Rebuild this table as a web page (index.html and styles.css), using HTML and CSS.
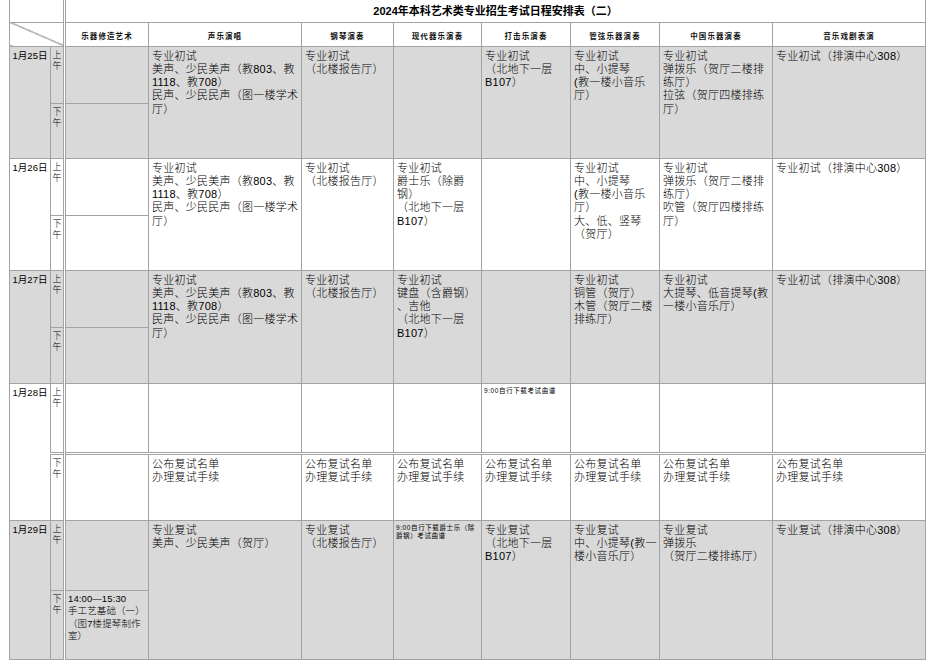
FILE: index.html
```html
<!DOCTYPE html>
<html lang="zh-CN">
<head>
<meta charset="utf-8">
<title>2024年本科艺术类专业招生考试日程安排表（二）</title>
<link rel="stylesheet" href="styles.css">
</head>
<body>
<table class="sched">
  <colgroup>
    <col class="w-date"><col class="w-per"><col class="w-c1"><col class="w-c2"><col class="w-c3">
    <col class="w-c4"><col class="w-c5"><col class="w-c6"><col class="w-c7"><col class="w-c8">
  </colgroup>
  <tr class="r-title">
    <td colspan="2" class="blank"></td>
    <td colspan="8" class="title c1">2024年本科艺术类专业招生考试日程安排表（二）</td>
  </tr>
  <tr class="r-head">
    <td colspan="2" class="diag"></td>
    <td class="hd c1">乐器修造艺术</td>
    <td class="hd">声乐演唱</td>
    <td class="hd">钢琴演奏</td>
    <td class="hd">现代器乐演奏</td>
    <td class="hd">打击乐演奏</td>
    <td class="hd">管弦乐器演奏</td>
    <td class="hd">中国乐器演奏</td>
    <td class="hd">音乐戏剧表演</td>
  </tr>

  <!-- 1月25日 -->
  <tr class="g r-am1">
    <td rowspan="2" class="date">1月25日</td>
    <td class="per">上<br>午</td>
    <td class="c1"></td>
    <td rowspan="2" class="t">专业初试<br>美声、少民美声（教803、教<br>1118、教708）<br>民声、少民民声（图一楼学术<br>厅）</td>
    <td rowspan="2" class="t">专业初试<br>（北楼报告厅）</td>
    <td rowspan="2" class="t"></td>
    <td rowspan="2" class="t">专业初试<br>（北地下一层<br>B107）</td>
    <td rowspan="2" class="t">专业初试<br>中、小提琴<br>(教一楼小音乐<br>厅）</td>
    <td rowspan="2" class="t">专业初试<br>弹拨乐（贺厅二楼排<br>练厅）<br>拉弦（贺厅四楼排练<br>厅）</td>
    <td rowspan="2" class="t">专业初试（排演中心308）</td>
  </tr>
  <tr class="g r-pm1">
    <td class="per">下<br>午</td>
    <td class="c1"></td>
  </tr>

  <!-- 1月26日 -->
  <tr class="r-am1">
    <td rowspan="2" class="date">1月26日</td>
    <td class="per">上<br>午</td>
    <td class="c1"></td>
    <td rowspan="2" class="t">专业初试<br>美声、少民美声（教803、教<br>1118、教708）<br>民声、少民民声（图一楼学术<br>厅）</td>
    <td rowspan="2" class="t">专业初试<br>（北楼报告厅）</td>
    <td rowspan="2" class="t">专业初试<br>爵士乐（除爵<br>钢）<br>（北地下一层<br>B107）</td>
    <td rowspan="2" class="t"></td>
    <td rowspan="2" class="t">专业初试<br>中、小提琴<br>(教一楼小音乐<br>厅）<br>大、低、竖琴<br>（贺厅）</td>
    <td rowspan="2" class="t">专业初试<br>弹拨乐（贺厅二楼排<br>练厅）<br>吹管（贺厅四楼排练<br>厅）</td>
    <td rowspan="2" class="t">专业初试（排演中心308）</td>
  </tr>
  <tr class="r-pm1">
    <td class="per">下<br>午</td>
    <td class="c1"></td>
  </tr>

  <!-- 1月27日 -->
  <tr class="g r-am1">
    <td rowspan="2" class="date">1月27日</td>
    <td class="per">上<br>午</td>
    <td class="c1"></td>
    <td rowspan="2" class="t">专业初试<br>美声、少民美声（教803、教<br>1118、教708）<br>民声、少民民声（图一楼学术<br>厅）</td>
    <td rowspan="2" class="t">专业初试<br>（北楼报告厅）</td>
    <td rowspan="2" class="t">专业初试<br>键盘（含爵钢）<br>、吉他<br>（北地下一层<br>B107）</td>
    <td rowspan="2" class="t"></td>
    <td rowspan="2" class="t">专业初试<br>铜管（贺厅）<br>木管（贺厅二楼<br>排练厅）</td>
    <td rowspan="2" class="t">专业初试<br>大提琴、低音提琴(教<br>一楼小音乐厅）</td>
    <td rowspan="2" class="t">专业初试（排演中心308）</td>
  </tr>
  <tr class="g r-pm3">
    <td class="per">下<br>午</td>
    <td class="c1"></td>
  </tr>

  <!-- 1月28日 -->
  <tr class="r-am4">
    <td rowspan="2" class="date">1月28日</td>
    <td class="per">上<br>午</td>
    <td class="c1"></td>
    <td class="t"></td>
    <td class="t"></td>
    <td class="t"></td>
    <td class="sm">9:00自行下载考试曲谱</td>
    <td class="t"></td>
    <td class="t"></td>
    <td class="t"></td>
  </tr>
  <tr class="r-pm4 split">
    <td class="per">下<br>午</td>
    <td class="c1"></td>
    <td class="t">公布复试名单<br>办理复试手续</td>
    <td class="t">公布复试名单<br>办理复试手续</td>
    <td class="t">公布复试名单<br>办理复试手续</td>
    <td class="t">公布复试名单<br>办理复试手续</td>
    <td class="t">公布复试名单<br>办理复试手续</td>
    <td class="t">公布复试名单<br>办理复试手续</td>
    <td class="t">公布复试名单<br>办理复试手续</td>
  </tr>

  <!-- 1月29日 -->
  <tr class="g r-am4">
    <td rowspan="2" class="date">1月29日</td>
    <td class="per">上<br>午</td>
    <td class="c1"></td>
    <td rowspan="2" class="t">专业复试<br>美声、少民美声（贺厅）</td>
    <td rowspan="2" class="t">专业复试<br>（北楼报告厅）</td>
    <td rowspan="2" class="sm">9:00自行下载爵士乐（除<br>爵钢）考试曲谱</td>
    <td rowspan="2" class="t">专业复试<br>（北地下一层<br>B107）</td>
    <td rowspan="2" class="t">专业复试<br>中、小提琴(教一<br>楼小音乐厅）</td>
    <td rowspan="2" class="t">专业复试<br>弹拨乐<br>（贺厅二楼排练厅）</td>
    <td rowspan="2" class="t">专业复试（排演中心308）</td>
  </tr>
  <tr class="g r-pm5">
    <td class="per">下<br>午</td>
    <td class="c1 t2">14:00—15:30<br>手工艺基础（一）<br>（图7楼提琴制作<br>室）</td>
  </tr>
</table>
</body>
</html>
```

FILE: styles.css
```css
html, body {
  margin: 0;
  padding: 0;
  background: #ffffff;
}

body {
  font-family: "Liberation Sans", "Noto Sans CJK SC", sans-serif;
  color: #000;
}

.sched {
  margin-left: 9px;
  border-collapse: collapse;
  table-layout: fixed;
  width: 916px;
}

.w-date { width: 41px; }
.w-per  { width: 14px; }
.w-c1   { width: 84px; }
.w-c2   { width: 153px; }
.w-c3   { width: 92px; }
.w-c4   { width: 88px; }
.w-c5   { width: 89px; }
.w-c6   { width: 89px; }
.w-c7   { width: 113px; }
.w-c8   { width: 153px; }

.sched td {
  border: 1px solid #a3a3a3;
  padding: 0;
  vertical-align: top;
  overflow: hidden;
}

.sched td.c1 {
  border-left: 3px double #a3a3a3;
}

.g td {
  background: #d9d9d9;
}

.r-title { height: 22px; }
.r-head  { height: 24px; }
.r-am1   { height: 57px; }
.r-pm1   { height: 55px; }
.r-pm3   { height: 56px; }
.r-am4   { height: 70px; }
.r-pm4   { height: 67px; }
.r-pm5   { height: 69px; }

.r-title td {
  border-top: none;
}

.title {
  font-weight: bold;
  font-size: 11px;
  line-height: 13px;
  text-align: center;
  vertical-align: middle !important;
  padding-top: 2px !important;
}

.diag {
  background: linear-gradient(to top right, transparent calc(50% - 0.6px), #333 50%, transparent calc(50% + 0.6px));
}

.hd {
  font-size: 7.5px;
  font-weight: bold;
  letter-spacing: 1.1px;
  line-height: 9px;
  text-align: center;
  vertical-align: middle !important;
  padding-top: 4px !important;
  color: #111;
}

.date {
  font-size: 9.5px;
  line-height: 12px;
  text-align: center;
  padding-top: 3px !important;
  white-space: nowrap;
}

.per {
  font-size: 9px;
  line-height: 11px;
  text-align: center;
  padding-top: 3px !important;
  font-weight: 300;
}

.t {
  font-size: 11px;
  line-height: 13.3px;
  letter-spacing: 0.25px;
  font-weight: 300;
  padding: 3px 0 0 3px !important;
  white-space: nowrap;
}

.t2 {
  font-size: 9.5px;
  line-height: 12.5px;
  letter-spacing: 0.1px;
  font-weight: 300;
  padding: 2px 0 0 2px !important;
  white-space: nowrap;
}

.sm {
  font-size: 6.5px;
  line-height: 8.5px;
  letter-spacing: 0.6px;
  padding: 3px 0 0 2px !important;
  white-space: nowrap;
}

.split td {
  border-top: 3px double #a3a3a3;
}
```
